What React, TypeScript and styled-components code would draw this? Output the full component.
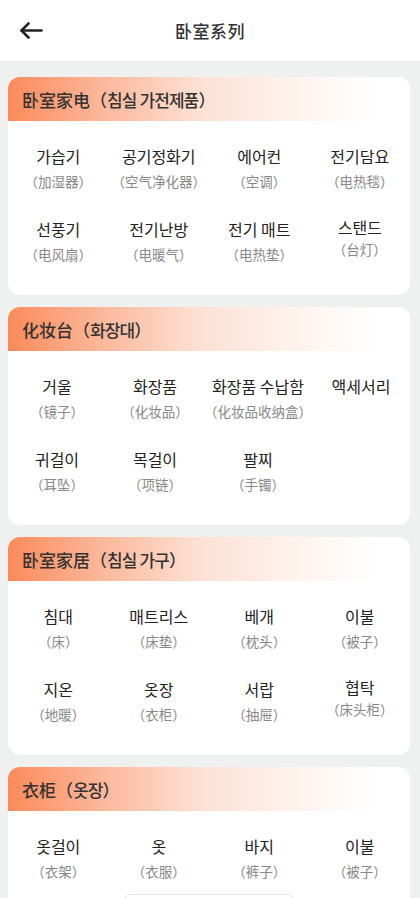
import React from "react";
import styled, { createGlobalStyle } from "styled-components";

const Global = createGlobalStyle`
  html, body { margin: 0; padding: 0; background: #eff0f0; }
  body { font-family: "Noto Sans CJK SC", "Noto Sans CJK KR", "Noto Sans", sans-serif; }
  * { box-sizing: border-box; }
`;

const Page = styled.div`
  min-height: 100vh;
  background: #eff0f0;
`;

const TopBar = styled.header`
  height: 61px;
  background: #ffffff;
  display: grid;
  grid-template-columns: 60px 1fr 60px;
  align-items: center;
`;

const BackButton = styled.button`
  border: none;
  background: transparent;
  padding: 0 0 0 19px;
  height: 100%;
  display: flex;
  align-items: center;
  color: #222;
`;

const TopTitle = styled.h1`
  margin: 0;
  text-align: center;
  font-size: 17px;
  font-weight: 500;
  color: #333;
  letter-spacing: 0.5px;
`;

const Content = styled.main`
  padding: 16px 10px 0 8px;
  display: flex;
  flex-direction: column;
  gap: 12px;
`;

const Card = styled.section`
  background: #fff;
  border-radius: 12px;
  overflow: hidden;
`;

const CardHeader = styled.h2`
  margin: 0;
  height: 44px;
  display: flex;
  align-items: center;
  padding-left: 14px;
  font-size: 17px;
  font-weight: 500;
  color: #333;
  white-space: pre;
  background: linear-gradient(90deg, #fb8a5a 0%, #fcb99d 24%, #fde1d4 48%, #fff3ee 72%, #ffffff 92%);
`;

const HeaderKo = styled.span`
  font-family: "Noto Sans CJK KR", "Noto Sans CJK SC", sans-serif;
  letter-spacing: -0.9px;
`;

const Grid = styled.div`
  display: grid;
  grid-template-columns: repeat(4, 1fr);
  row-gap: 26px;
  padding: 24px 0 30px;
`;

const Item = styled.div<{ $lift?: boolean }>`
  display: flex;
  flex-direction: column;
  align-items: center;
  margin-top: ${(p) => (p.$lift ? "-2px" : "0")};
`;

const Ko = styled.span`
  font-family: "Noto Sans CJK KR", "Noto Sans CJK SC", sans-serif;
  font-size: 16px;
  line-height: 22px;
  color: #222;
  white-space: nowrap;
`;

const Zh = styled.span<{ $lift?: boolean }>`
  font-size: 13.5px;
  line-height: 22px;
  margin-top: ${(p) => (p.$lift ? "0" : "3px")};
  color: #888;
  white-space: nowrap;
`;

const FloatingBox = styled.div`
  position: fixed;
  left: 125px;
  top: 894px;
  width: 168px;
  height: 20px;
  background: #fff;
  border: 1px solid #e8e8e8;
  border-radius: 4px;
`;

type Entry = { ko: string; zh?: string; lift?: boolean };

const sections: { zh: string; ko: string; items: Entry[] }[] = [
  {
    zh: "卧室家电",
    ko: "침실 가전제품",
    items: [
      { ko: "가습기", zh: "（加湿器）" },
      { ko: "공기정화기", zh: "（空气净化器）" },
      { ko: "에어컨", zh: "（空调）" },
      { ko: "전기담요", zh: "（电热毯）" },
      { ko: "선풍기", zh: "（电风扇）" },
      { ko: "전기난방", zh: "（电暖气）" },
      { ko: "전기 매트", zh: "（电热垫）" },
      { ko: "스탠드", zh: "（台灯）", lift: true },
    ],
  },
  {
    zh: "化妆台",
    ko: "화장대",
    items: [
      { ko: "거울", zh: "（镜子）" },
      { ko: "화장품", zh: "（化妆品）" },
      { ko: "화장품 수납함", zh: "（化妆品收纳盒）" },
      { ko: "액세서리" },
      { ko: "귀걸이", zh: "（耳坠）" },
      { ko: "목걸이", zh: "（项链）" },
      { ko: "팔찌", zh: "（手镯）" },
    ],
  },
  {
    zh: "卧室家居",
    ko: "침실 가구",
    items: [
      { ko: "침대", zh: "（床）" },
      { ko: "매트리스", zh: "（床垫）" },
      { ko: "베개", zh: "（枕头）" },
      { ko: "이불", zh: "（被子）" },
      { ko: "지온", zh: "（地暖）" },
      { ko: "옷장", zh: "（衣柜）" },
      { ko: "서랍", zh: "（抽屉）" },
      { ko: "협탁", zh: "（床头柜）", lift: true },
    ],
  },
  {
    zh: "衣柜",
    ko: "옷장",
    items: [
      { ko: "옷걸이", zh: "（衣架）" },
      { ko: "옷", zh: "（衣服）" },
      { ko: "바지", zh: "（裤子）" },
      { ko: "이불", zh: "（被子）" },
    ],
  },
];

const BackArrow = () => (
  <svg width="24" height="17" viewBox="0 0 24 17" fill="none">
    <path d="M2.5 8.5H22.5" stroke="currentColor" strokeWidth="2.6" strokeLinecap="round" />
    <path d="M9.5 1.5L2.5 8.5L9.5 15.5" stroke="currentColor" strokeWidth="2.6" strokeLinecap="round" strokeLinejoin="round" />
  </svg>
);

export default function App() {
  return (
    <Page>
      <Global />
      <TopBar>
        <BackButton aria-label="back">
          <BackArrow />
        </BackButton>
        <TopTitle>卧室系列</TopTitle>
        <div />
      </TopBar>
      <Content>
        {sections.map((s, i) => (
          <Card key={i}>
            <CardHeader>
              {s.zh}（<HeaderKo>{s.ko}</HeaderKo>）
            </CardHeader>
            <Grid>
              {s.items.map((it, j) => (
                <Item key={j} $lift={it.lift}>
                  <Ko>{it.ko}</Ko>
                  {it.zh && <Zh $lift={it.lift}>{it.zh}</Zh>}
                </Item>
              ))}
            </Grid>
          </Card>
        ))}
      </Content>
      <FloatingBox />
    </Page>
  );
}
